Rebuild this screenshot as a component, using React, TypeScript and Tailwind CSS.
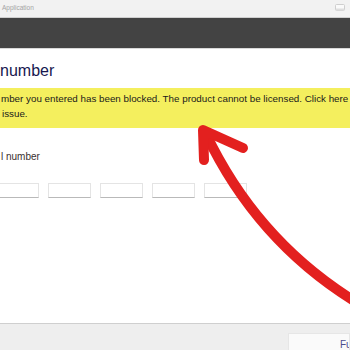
export default function App() {
  const boxes = [0, 1, 2, 3, 4];

  return (
    <div className="relative w-[350px] h-[350px] overflow-hidden bg-white flex flex-col font-['Liberation_Sans',Arial,sans-serif]">
      {/* window title bar */}
      <div className="h-[17px] bg-[#f2f2f2] flex items-center justify-between pl-[2px] pr-[5px]">
        <span className="text-[6.5px] text-[#a3a3a3] leading-none">Application</span>
        <svg width="10" height="7" viewBox="0 0 10 7" className="mb-[3px]">
          <rect x="0.5" y="0.5" width="9" height="6" rx="1" fill="#fafafa" stroke="#cfcfcf" />
          <rect x="1" y="4.5" width="8" height="2" fill="#dedede" />
        </svg>
      </div>
      <div className="h-px bg-[#cfcfcf]" />
      <div className="h-[31px] bg-[#434343] border-b border-[#d8d8d8]" />

      {/* content */}
      <main className="flex-1 flex flex-col">
        <h1 className="mt-[14px] text-[16px] leading-[16px] text-[#17174f]">number</h1>

        <div className="mt-[9px] h-[40px] bg-[#f4ef5e] pt-[3px] pl-[1px] text-[9.8px] leading-[15px] text-[#1a1a1a] whitespace-nowrap">
          <p>mber you entered has been blocked. The product cannot be licensed. Click here</p>
          <p className="pl-px">issue.</p>
        </div>

        <p className="mt-[23px] pl-[1px] text-[10px] leading-[12px] text-[#3a3030]">l number</p>

        <div className="mt-[20px] ml-[-4px] flex gap-[9px]">
          {boxes.map((b) => (
            <div
              key={b}
              className="w-[43px] h-[15px] shrink-0 bg-white border border-[#e4e4e4] border-b-[#b9b9b9]"
            />
          ))}
        </div>
      </main>

      {/* footer */}
      <footer className="h-[27px] border-t border-[#cfcfcf] bg-[#eeeeee] flex">
        <button className="ml-auto mt-[9px] w-[62px] h-[22px] bg-[#fafafa] border border-[#e6e6e6] pl-[51px] text-left text-[10px] text-[#4b4b8c] overflow-hidden whitespace-nowrap">
          Full
        </button>
      </footer>

      {/* red annotation arrow */}
      <svg className="absolute inset-0 pointer-events-none" width="350" height="350" viewBox="0 0 350 350">
        <path
          d="M206 134 Q257 241 356 302"
          fill="none"
          stroke="#e3201f"
          strokeWidth="10"
          strokeLinecap="round"
        />
        <path
          d="M204 160 L203 130 L243 148"
          fill="none"
          stroke="#e3201f"
          strokeWidth="10"
          strokeLinecap="round"
          strokeLinejoin="round"
        />
      </svg>
    </div>
  );
}
